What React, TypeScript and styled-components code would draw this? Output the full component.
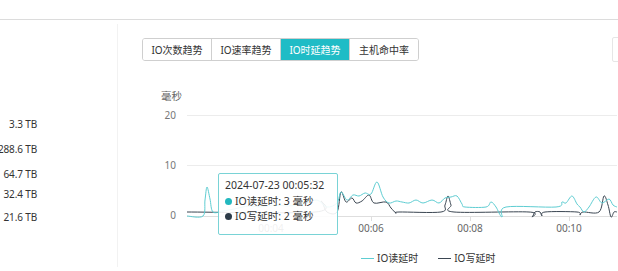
import styled, { createGlobalStyle } from 'styled-components';

const GlobalStyle = createGlobalStyle`
  html, body {
    margin: 0;
    padding: 0;
    background: #fff;
    overflow: hidden;
  }
  body {
    font-family: "Noto Sans", "Noto Sans CJK SC", sans-serif;
    color: #333;
  }
`;

const Page = styled.div`
  width: 618px;
  height: 271px;
  display: flex;
  flex-direction: column;
  overflow: hidden;
`;

const TopBar = styled.div`
  height: 19px;
  border-bottom: 1px solid #dcdcdc;
  flex-shrink: 0;
`;

const Body = styled.div`
  display: flex;
  flex: 1;
`;

const LeftPanel = styled.div`
  width: 37px;
  flex-shrink: 0;
  border-right: 1px solid #f2f2f2;
  margin: 4px 0;
  padding: 92px 80px 0 0;
`;

const ValueRow = styled.div<{ $gap: number }>`
  display: flex;
  justify-content: flex-end;
  white-space: nowrap;
  font-size: 10px;
  letter-spacing: -0.15px;
  line-height: 16px;
  margin-top: ${p => p.$gap}px;
  color: #333;
`;

const RightPanel = styled.div`
  flex: 1;
  position: relative;
  display: flex;
  flex-direction: column;
`;

const TabRow = styled.div`
  display: flex;
  align-items: flex-start;
  height: 23px;
  padding: 18px 0 0 24px;
`;

const TabGroup = styled.div`
  display: flex;
  border: 1px solid #cfcfcf;
  border-radius: 3px;
  overflow: hidden;
`;

const Tab = styled.div<{ $active?: boolean }>`
  width: 68px;
  height: 21px;
  display: flex;
  align-items: center;
  justify-content: center;
  font-size: 10px;
  color: ${p => (p.$active ? '#fff' : '#333')};
  background: ${p => (p.$active ? '#1fbcc6' : '#fff')};
  border-left: 1px solid #cfcfcf;
  &:first-child {
    border-left: 0;
  }
`;

const EdgeBox = styled.div`
  margin-left: 193px;
  margin-top: -1px;
  width: 40px;
  height: 23px;
  flex-shrink: 0;
  border: 1px solid #e6e6e6;
  border-radius: 2px;
`;

const Chart = styled.svg`
  display: block;
  margin-top: 23px;
  font-family: "Noto Sans", "Noto Sans CJK SC", sans-serif;
`;

const Legend = styled.div`
  display: flex;
  align-items: center;
  gap: 20px;
  padding-left: 243px;
  margin-top: 11px;
`;

const LegendItem = styled.div`
  display: flex;
  align-items: center;
  gap: 3px;
  font-size: 10px;
  line-height: 14px;
  color: #333;
`;

const LegendLine = styled.span<{ $color: string }>`
  width: 13px;
  height: 1px;
  background: ${p => p.$color};
`;

const Tooltip = styled.div`
  position: absolute;
  left: 100px;
  top: 153px;
  width: 106px;
  height: 54px;
  padding: 4px 6px 2px;
  border: 1px solid #79d3d6;
  border-radius: 2px;
  background: rgba(255, 255, 255, 0.9);
  font-size: 10.5px;
  line-height: 15.5px;
  color: #333;
  white-space: nowrap;
`;

const TipRow = styled.div`
  display: flex;
  align-items: center;
`;

const Dot = styled.span<{ $color: string }>`
  width: 7px;
  height: 7px;
  border-radius: 50%;
  background: ${p => p.$color};
  margin-right: 3px;
  flex-shrink: 0;
`;

const TEAL = '#5ecdd2';
const DARK = '#3b4652';

const readPts: [number, number][] = [
  [188, 216], [204, 216], [206, 200], [208, 187], [211, 199], [214, 212], [224, 211],
  [235, 209], [250, 206], [262, 207], [275, 205], [290, 206], [305, 204], [318, 200],
  [328, 207], [338, 203], [342, 192], [348, 200], [354, 195], [360, 196], [366, 193],
  [372, 194], [378, 182], [384, 197], [390, 203], [397, 201], [403, 202], [410, 203],
  [417, 200], [424, 203], [433, 200], [440, 203], [446, 198], [452, 197], [458, 196],
  [463, 204], [466, 207], [487, 207], [492, 202], [497, 207], [503, 217], [507, 207],
  [557, 207], [563, 202], [567, 203], [573, 196], [578, 204], [581, 207], [585, 212],
  [590, 207], [597, 197], [603, 203], [610, 199], [614, 205], [618, 207],
];

const writePts: [number, number][] = [
  [188, 212], [316, 212], [322, 201], [328, 212], [338, 212], [342, 192], [347, 202],
  [353, 198], [357, 203], [363, 201], [370, 195], [375, 203], [387, 202], [392, 208],
  [397, 213], [400, 212], [442, 212], [446, 205], [449, 196], [452, 205], [455, 212],
  [530, 212], [533, 217], [536, 212], [541, 212], [543, 216], [546, 212], [578, 212],
  [581, 215], [584, 212], [600, 212], [605, 196], [609, 205], [612, 217], [615, 212],
  [618, 212],
];

function smoothPath(pts: [number, number][]) {
  let d = `M${pts[0][0]},${pts[0][1]}`;
  for (let i = 0; i < pts.length - 1; i++) {
    const p0 = pts[i - 1] || pts[i];
    const p1 = pts[i];
    const p2 = pts[i + 1];
    const p3 = pts[i + 2] || p2;
    const c1x = p1[0] + (p2[0] - p0[0]) / 6;
    const c1y = p1[1] + (p2[1] - p0[1]) / 6;
    const c2x = p2[0] - (p3[0] - p1[0]) / 6;
    const c2y = p2[1] - (p3[1] - p1[1]) / 6;
    d += ` C${c1x.toFixed(1)},${c1y.toFixed(1)} ${c2x.toFixed(1)},${c2y.toFixed(1)} ${p2[0]},${p2[1]}`;
  }
  return d;
}

const values = [
  { v: '3.3 TB', gap: 0 },
  { v: '288.6 TB', gap: 9 },
  { v: '64.7 TB', gap: 9 },
  { v: '32.4 TB', gap: 4 },
  { v: '21.6 TB', gap: 7 },
];

const xTicks = [
  { x: 272, label: '00:04' },
  { x: 372, label: '00:06' },
  { x: 471, label: '00:08' },
  { x: 570, label: '00:10' },
];

const yTicks = [
  { y: 115, label: '20' },
  { y: 165, label: '10' },
  { y: 215, label: '0' },
];

export default function App() {
  return (
    <Page>
      <GlobalStyle />
      <TopBar />
      <Body>
        <LeftPanel>
          {values.map((r, i) => (
            <ValueRow key={i} $gap={r.gap}>{r.v}</ValueRow>
          ))}
        </LeftPanel>
        <RightPanel>
          <TabRow>
            <TabGroup>
              <Tab>IO次数趋势</Tab>
              <Tab>IO速率趋势</Tab>
              <Tab $active>IO时延趋势</Tab>
              <Tab>主机命中率</Tab>
            </TabGroup>
            <EdgeBox />
          </TabRow>

          <Chart width={499} height={156} viewBox="119 84 499 156">
            <text x={162} y={100} fontSize={10.5} fill="#666">毫秒</text>
            {yTicks.map(t => (
              <text key={t.label} x={177} y={t.y + 3.5} fontSize={10} fill="#777" textAnchor="end">
                {t.label}
              </text>
            ))}
            <line x1={188} x2={618} y1={115.5} y2={115.5} stroke="#ececec" />
            <line x1={188} x2={618} y1={165.5} y2={165.5} stroke="#ececec" />
            <line x1={188} x2={618} y1={216.5} y2={216.5} stroke="#dedede" />
            {xTicks.map(t => (
              <g key={t.label}>
                <line x1={t.x + 0.5} x2={t.x + 0.5} y1={216} y2={221} stroke="#dedede" />
                <text x={t.x} y={232} fontSize={10} fill="#666" textAnchor="middle">
                  {t.label}
                </text>
              </g>
            ))}
            <path d={smoothPath(writePts)} fill="none" stroke={DARK} strokeWidth={1} />
            <path d={smoothPath(readPts)} fill="none" stroke={TEAL} strokeWidth={1} />
          </Chart>

          <Legend>
            <LegendItem>
              <LegendLine $color={TEAL} />
              IO读延时
            </LegendItem>
            <LegendItem>
              <LegendLine $color={DARK} />
              IO写延时
            </LegendItem>
          </Legend>

          <Tooltip>
            <div>2024-07-23 00:05:32</div>
            <TipRow>
              <Dot $color="#22b8bf" />
              IO读延时: 3 毫秒
            </TipRow>
            <TipRow>
              <Dot $color="#2c3b48" />
              IO写延时: 2 毫秒
            </TipRow>
          </Tooltip>
        </RightPanel>
      </Body>
    </Page>
  );
}
